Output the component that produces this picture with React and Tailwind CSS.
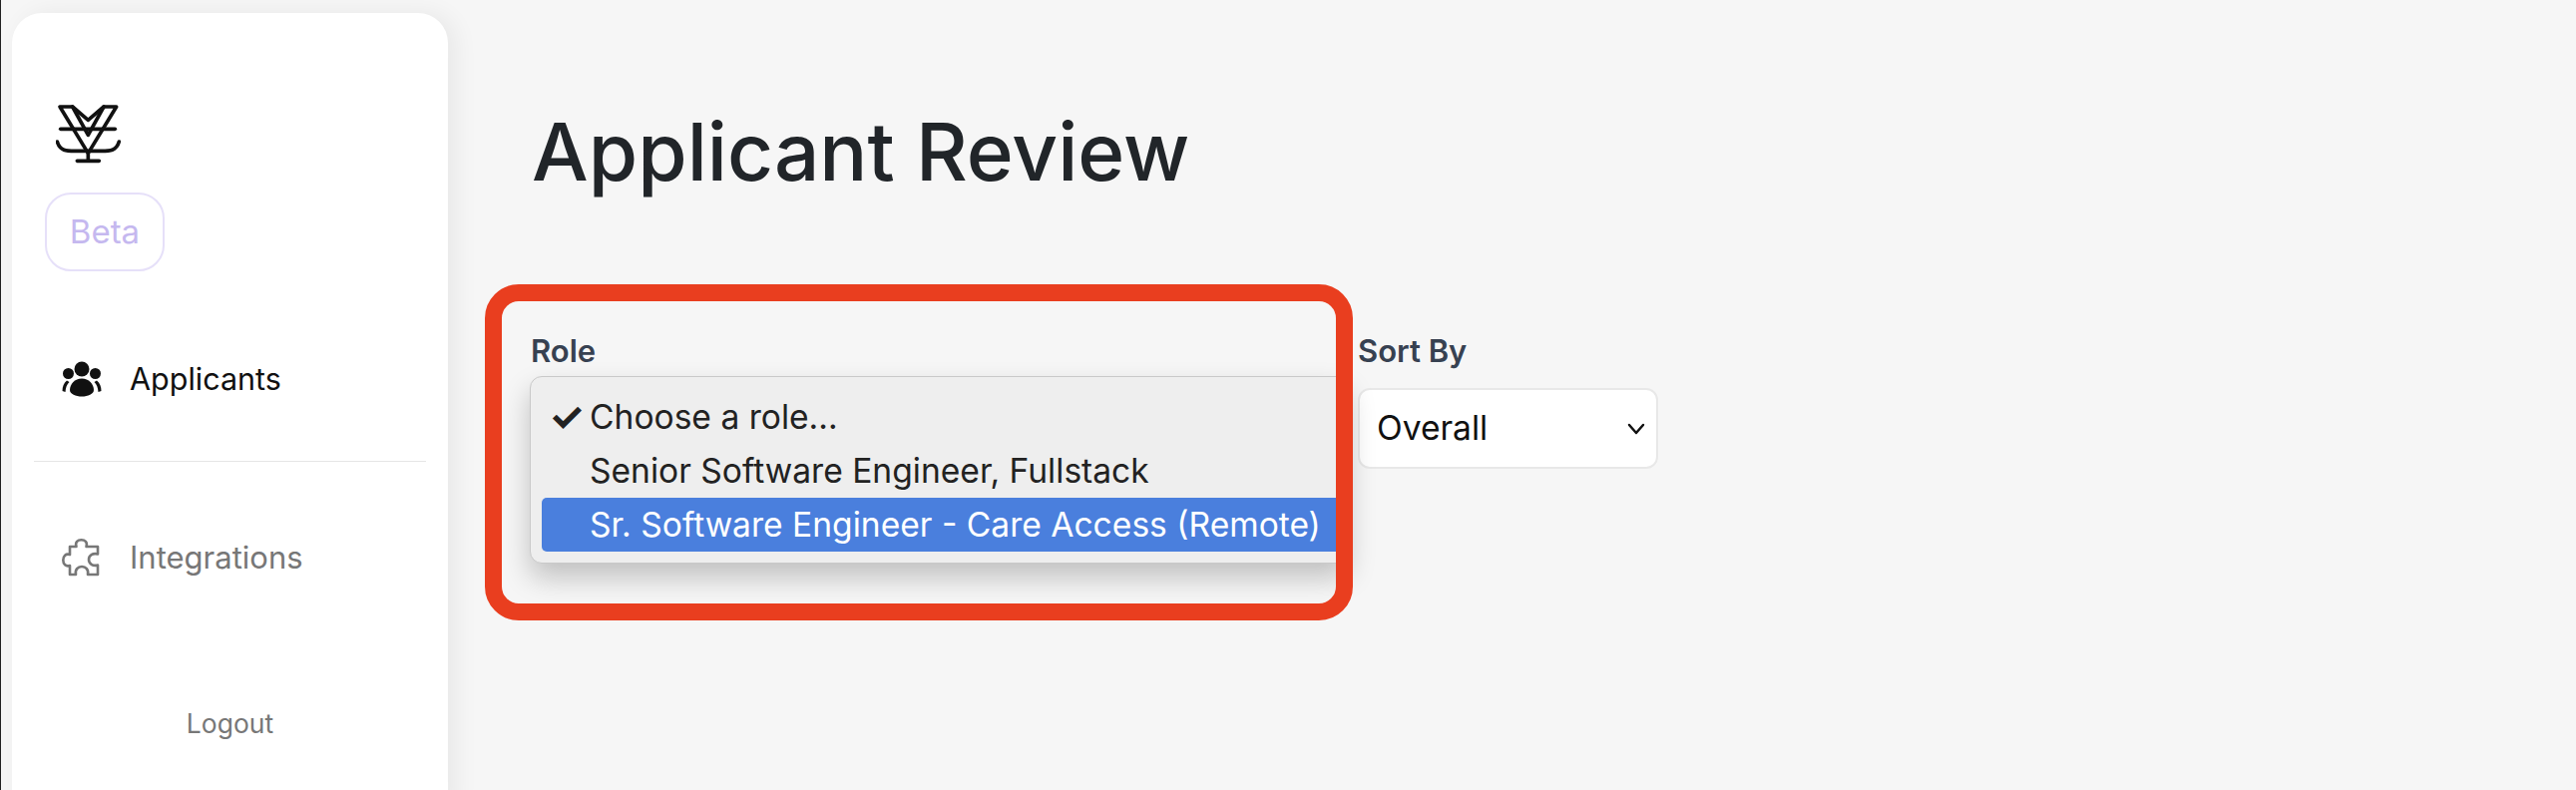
const font = "font-['Inter','Liberation_Sans',sans-serif]"

const Logo = () => (
  <svg width="65" height="59" viewBox="78 44 195 177" fill="none" stroke="#111" strokeWidth="11" strokeLinecap="round" strokeLinejoin="round">
    <path d="M90 50 H128 L175 135 L222 50 H260 L175 190 Z" />
    <path d="M128 50 L175 90 L222 50" />
    <path d="M92 117 H256" />
    <path d="M82 155 C90 183 110 183 135 183 H215 C240 183 260 183 268 155" />
    <path d="M175 190 V213 M142 213 H208" />
  </svg>
)

const PeopleIcon = () => (
  <svg width="40" height="36" viewBox="0 0 40 36" fill="#111">
    <circle cx="20" cy="8" r="7.5" />
    <circle cx="6.5" cy="12.5" r="5.5" />
    <circle cx="33.5" cy="12.5" r="5.5" />
    <path d="M20 17.5 C27 17.5 32 23 32 29 C32 33 26 35.5 20 35.5 C14 35.5 8 33 8 29 C8 23 13 17.5 20 17.5 Z" />
    <path d="M5 19.5 C2 22 0.5 25.500 0.500 30 L3.500 31 C3.800 26.500 5 23.500 7.500 21 Z" />
    <path d="M35 19.500 C38 22 39.500 25.500 39.500 30 L36.500 31 C36.200 26.500 35 23.500 32.500 21 Z" />
  </svg>
)

const PuzzleIcon = () => (
  <svg width="38" height="38" viewBox="0 0 38 38" fill="none" stroke="#777" strokeWidth="2.6" strokeLinejoin="round">
    <path d="M8 8 H14.500 C13 3 16 1.300 19.500 1.300 C23 1.300 26 3 24.500 8 H36 V15.500 C31 14 27 17 27 21 C27 25 31 28 36 26.500 V36 H26 C27 31 24 28 20 28 C16 28 13 31 14 36 H8 V27 C4 28.500 1.300 25.500 1.300 21.500 C1.300 17.500 4 14.500 8 16 Z" />
  </svg>
)

const App = () => {
  return (
    <div className={`${font} flex w-full h-[792px] overflow-hidden bg-[#f6f6f6] border-l border-[#222]`}>
      {/* Sidebar */}
      <aside className="ml-[11px] mt-[13px] w-[437px] h-[800px] shrink-0 rounded-t-[30px] bg-white shadow-[8px_0_24px_rgba(0,0,0,0.06)] flex flex-col">
        <div className="ml-[44px] mt-[92px]">
          <Logo />
        </div>
        <div className="ml-[33px] mt-[29px] w-[120px] h-[79px] rounded-[26px] border-2 border-[#e6e0f9] flex items-center justify-center text-[33px] text-[#c5b8ef]">
          Beta
        </div>
        <div className="ml-[50px] mt-[90px] h-[36px] flex items-center gap-[28px] text-[30.5px] text-[#111]">
          <PeopleIcon />
          <span>Applicants</span>
        </div>
        <div className="mx-[22px] mt-[64px] h-px bg-[#e5e5e5]" />
        <div className="ml-[50px] mt-[77px] h-[38px] flex items-center gap-[30px] text-[31px] text-[#777]">
          <PuzzleIcon />
          <span>Integrations</span>
        </div>
        <div className="mt-[128px] text-center text-[26.5px] text-[#777]">Logout</div>
      </aside>

      {/* Main */}
      <main className="pl-[82px] pt-[116px] flex-1">
        <h1 className="pl-[2px] text-[80px] leading-[72px] font-medium text-[#212529]">Applicant Review</h1>
        <div className="mt-[165px] flex gap-[10px]">
          <div className="relative w-[820px]">
            <label className="block pl-[1px] h-[30px] leading-[30px] text-[31px] font-semibold text-[#374151] -mt-[16px]">Role</label>
            <div className="mt-[22px] h-[78px]" />
            {/* Open dropdown */}
            <div className="absolute left-0 top-[24px] w-[820px] h-[188px] rounded-[12px] border border-[#c9c9c9] bg-[#eeeeee] shadow-[0_14px_28px_rgba(0,0,0,0.22)] text-[33.6px] text-[#222] z-10 pt-[13px] pl-[11px] overflow-hidden">
              <div className="h-[54px] leading-[54px] flex">
                <span className="w-[48px] pl-[7px] text-[40px] font-bold">✓</span>
                <span>Choose a role...</span>
              </div>
              <div className="h-[54px] leading-[54px] pl-[48px]">Senior Software Engineer, Fullstack</div>
              <div className="h-[54px] leading-[54px] pl-[48px] rounded-l-[5px] bg-[#4a7fdd] text-white whitespace-nowrap">Sr. Software Engineer - Care Access (Remote)</div>
            </div>
            {/* Red annotation */}
            <div className="absolute left-[-45px] top-[-68px] w-[870px] h-[337px] rounded-[34px] border-[17px] border-[#e93e1f] z-20" />
          </div>
          <div className="w-[301px]">
            <label className="block h-[30px] leading-[30px] text-[31px] font-semibold text-[#374151] -mt-[16px]">Sort By</label>
            <div className="mt-[22px] h-[81px] rounded-[12px] border-2 border-[#e8e8e8] bg-white flex items-center justify-between pl-[17px] pr-[11px] text-[33.6px] text-[#111]">
              <span>Overall</span>
              <svg width="18" height="12" viewBox="0 0 18 12" fill="none" stroke="#111" strokeWidth="2.500" strokeLinecap="round" strokeLinejoin="round">
                <path d="M2 2 L9 10 L16 2" />
              </svg>
            </div>
          </div>
        </div>
      </main>
    </div>
  )
}

export default App
